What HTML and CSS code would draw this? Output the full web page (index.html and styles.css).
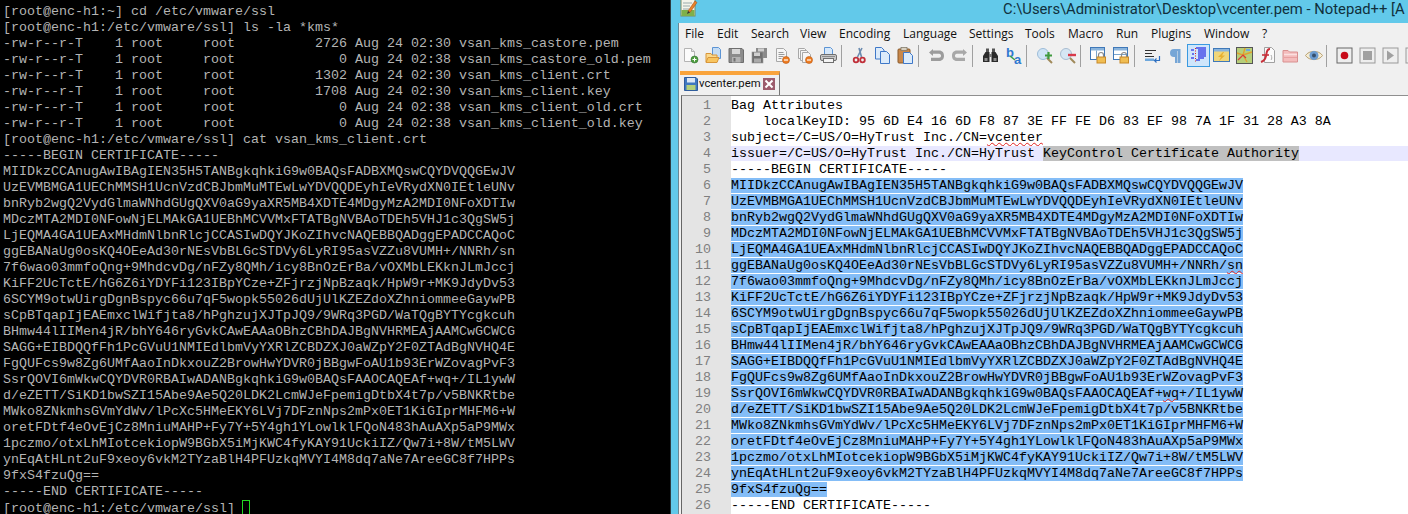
FILE: index.html
```html
<!DOCTYPE html>
<html lang="en">
<head>
<meta charset="utf-8">
<title>vcenter.pem</title>
<link rel="stylesheet" href="styles.css">
</head>
<body>
<main class="screen">
<pre class="term">[root@enc-h1:~] cd /etc/vmware/ssl
[root@enc-h1:/etc/vmware/ssl] ls -la *kms*
-rw-r--r-T    1 root     root          2726 Aug 24 02:30 vsan_kms_castore.pem
-rw-r--r-T    1 root     root             0 Aug 24 02:38 vsan_kms_castore_old.pem
-rw-r--r-T    1 root     root          1302 Aug 24 02:30 vsan_kms_client.crt
-rw-r--r-T    1 root     root          1708 Aug 24 02:30 vsan_kms_client.key
-rw-r--r-T    1 root     root             0 Aug 24 02:38 vsan_kms_client_old.crt
-rw-r--r-T    1 root     root             0 Aug 24 02:38 vsan_kms_client_old.key
[root@enc-h1:/etc/vmware/ssl] cat vsan_kms_client.crt
-----BEGIN CERTIFICATE-----
MIIDkzCCAnugAwIBAgIEN35H5TANBgkqhkiG9w0BAQsFADBXMQswCQYDVQQGEwJV
UzEVMBMGA1UEChMMSH1UcnVzdCBJbmMuMTEwLwYDVQQDEyhIeVRydXN0IEtleUNv
bnRyb2wgQ2VydGlmaWNhdGUgQXV0aG9yaXR5MB4XDTE4MDgyMzA2MDI0NFoXDTIw
MDczMTA2MDI0NFowNjELMAkGA1UEBhMCVVMxFTATBgNVBAoTDEh5VHJ1c3QgSW5j
LjEQMA4GA1UEAxMHdmNlbnRlcjCCASIwDQYJKoZIhvcNAQEBBQADggEPADCCAQoC
ggEBANaUg0osKQ4OEeAd30rNEsVbBLGcSTDVy6LyRI95asVZZu8VUMH+/NNRh/sn
7f6wao03mmfoQng+9MhdcvDg/nFZy8QMh/icy8BnOzErBa/vOXMbLEKknJLmJccj
KiFF2UcTctE/hG6Z6iYDYFi123IBpYCze+ZFjrzjNpBzaqk/HpW9r+MK9JdyDv53
6SCYM9otwUirgDgnBspyc66u7qF5wopk55026dUjUlKZEZdoXZhniommeeGaywPB
sCpBTqapIjEAEmxclWifjta8/hPghzujXJTpJQ9/9WRq3PGD/WaTQgBYTYcgkcuh
BHmw44lIIMen4jR/bhY646ryGvkCAwEAAaOBhzCBhDAJBgNVHRMEAjAAMCwGCWCG
SAGG+EIBDQQfFh1PcGVuU1NMIEdlbmVyYXRlZCBDZXJ0aWZpY2F0ZTAdBgNVHQ4E
FgQUFcs9w8Zg6UMfAaoInDkxouZ2BrowHwYDVR0jBBgwFoAU1b93ErWZovagPvF3
SsrQOVI6mWkwCQYDVR0RBAIwADANBgkqhkiG9w0BAQsFAAOCAQEAf+wq+/IL1ywW
d/eZETT/SiKD1bwSZI15Abe9Ae5Q20LDK2LcmWJeFpemigDtbX4t7p/v5BNKRtbe
MWko8ZNkmhsGVmYdWv/lPcXc5HMeEKY6LVj7DFznNps2mPx0ET1KiGIprMHFM6+W
oretFDtf4eOvEjCz8MniuMAHP+Fy7Y+5Y4gh1YLowlklFQoN483hAuAXp5aP9MWx
1pczmo/otxLhMIotcekiopW9BGbX5iMjKWC4fyKAY91UckiIZ/Qw7i+8W/tM5LWV
ynEqAtHLnt2uF9xeoy6vkM2TYzaBlH4PFUzkqMVYI4M8dq7aNe7AreeGC8f7HPPs
9fxS4fzuQg==
-----END CERTIFICATE-----
[root@enc-h1:/etc/vmware/ssl] <span class="cursor"></span></pre>

<section class="np">
  <header class="titlebar">
    <svg class="appicon" width="18" height="17" viewBox="0 0 18 17"><rect x="1" y="-2" width="14" height="18" fill="#f4f4ea" stroke="#7d8a60"/><rect x="1.5" y="10" width="13" height="6" fill="#7fb04a"/><path d="M3 3h9M3 6h7M3 9h6" stroke="#9aa" fill="none"/><path d="M8 11L15 1l2 1.500L10 12.500z" fill="#e9832a" stroke="#a8501a" stroke-width=".6"/><path d="M8 11l-1 3 3-1.500z" fill="#333"/></svg>
    <span class="wintitle">C:\Users\Administrator\Desktop\vcenter.pem - Notepad++ [A</span>
  </header>
  <div class="client">
    <nav class="menu">
      <span>File</span><span>Edit</span><span>Search</span><span>View</span><span>Encoding</span><span>Language</span><span>Settings</span><span>Tools</span><span>Macro</span><span>Run</span><span>Plugins</span><span>Window</span><span>?</span>
    </nav>
    <div class="toolbar">
      <span class="tool"><svg width="17" height="17" viewBox="0 0 17 17"><path d="M2.500 1.500h7l3 3v10h-10z" fill="#fbfbfb" stroke="#b4b4b4"/><path d="M9.500 1.500v3h3" fill="#e4e4e4" stroke="#b4b4b4"/><circle cx="12.500" cy="12.500" r="3.500" fill="#4f9e3f" stroke="#2f7030" stroke-width=".6"/><path d="M10.500 12.500h4M12.500 10.500v4" stroke="#fff"/></svg></span>
      <span class="tool"><svg width="17" height="17" viewBox="0 0 17 17"><path d="M7.500 .5h6l2 2v9h-8z" fill="#c4dcf4" stroke="#5c94d4"/><path d="M1 6.500h5l1 1.500h5v7H1z" fill="#fbd98c" stroke="#d8963a"/><path d="M1 15.500l2-5h11l-2 5z" fill="#f8c560" stroke="#d8963a"/></svg></span>
      <span class="tool"><svg width="17" height="17" viewBox="0 0 17 17"><path d="M1 1.500h13l1.500 1.500v12.500H1z" fill="#8c8c8c" stroke="#6e6e6e"/><rect x="4" y="2" width="8" height="5" fill="#d8d8d8"/><rect x="4" y="10" width="8.500" height="5.500" fill="#b4b4b4"/><rect x="5.500" y="11" width="2" height="3.500" fill="#707070"/></svg></span>
      <span class="tool"><svg width="17" height="17" viewBox="0 0 17 17"><rect x="5" y="1" width="11" height="10" fill="#8a8a8a"/><rect x="7" y="1.500" width="6" height="3" fill="#cfcfcf"/><rect x="1" y="5" width="11" height="11" fill="#707070" stroke="#999" stroke-width=".6"/><rect x="3" y="5.500" width="6" height="3.500" fill="#cfcfcf"/><rect x="3" y="11.500" width="7" height="4" fill="#aaa"/></svg></span>
      <span class="tool"><svg width="17" height="17" viewBox="0 0 17 17"><path d="M2.500 1.500h7l3 3v10h-10z" fill="#f6f6f6" stroke="#a8a8a8"/><path d="M4.500 5.500h5M4.500 7.500h6M4.500 9.500h5M4.500 11.500h3" stroke="#9a9a9a"/><circle cx="12" cy="13" r="3.500" fill="#ee7d22" stroke="#b85510" stroke-width=".6"/><path d="M10 13h4" stroke="#fff" stroke-width="1.200"/></svg></span>
      <span class="tool"><svg width="17" height="17" viewBox="0 0 17 17"><path d="M1.500 1.500h6l2 2v8h-8z" fill="#f6f6f6" stroke="#a8a8a8"/><path d="M3.500 3.500h6l2 2v8h-8z" fill="#f6f6f6" stroke="#a8a8a8"/><path d="M5.500 5.500h6l2 2v8h-8z" fill="#f6f6f6" stroke="#a8a8a8"/><circle cx="12" cy="13" r="3.500" fill="#ee7d22" stroke="#b85510" stroke-width=".6"/><path d="M10 13h4" stroke="#fff" stroke-width="1.200"/></svg></span>
      <span class="tool"><svg width="17" height="17" viewBox="0 0 17 17"><path d="M4.500 .5h6l2 2v6h-8z" fill="#d6e8fa" stroke="#5c94d4"/><rect x=".5" y="7.500" width="16" height="6" rx="1.500" fill="#c8c8c8" stroke="#6f6f6f"/><rect x="3.500" y="11.500" width="10" height="4" fill="#f4f4f4" stroke="#6f6f6f"/><rect x="2" y="9" width="13" height="1" fill="#8a8a8a"/></svg></span>
      <span class="tsep"></span>
      <span class="tool"><svg width="17" height="17" viewBox="0 0 17 17"><path d="M6.500 10L11 1M10.500 10L8 1" stroke="#6c8cb0" stroke-width="1.600" fill="none"/><circle cx="5" cy="13" r="2.300" fill="none" stroke="#c0303a" stroke-width="1.800"/><circle cx="11.500" cy="13" r="2.300" fill="none" stroke="#c0303a" stroke-width="1.800"/></svg></span>
      <span class="tool"><svg width="17" height="17" viewBox="0 0 17 17"><path d="M1.500 .5h6l2.500 2.500v9h-8.500z" fill="#dcebfa" stroke="#3f78c8"/><path d="M6.500 4.500h6l3 3v9h-9z" fill="#dcebfa" stroke="#3f78c8"/></svg></span>
      <span class="tool"><svg width="17" height="17" viewBox="0 0 17 17"><rect x="1" y="2" width="12" height="14" rx="1" fill="#c8874a" stroke="#8a5a2a"/><rect x="4" y=".5" width="6" height="3" fill="#d8d0c0" stroke="#77705f" stroke-width=".7"/><path d="M6.500 5.500h6l3 3v8h-9z" fill="#dcebfa" stroke="#3f78c8"/></svg></span>
      <span class="tsep"></span>
      <span class="tool"><svg width="17" height="17" viewBox="0 0 17 17"><path d="M5 2L1 5.500 5 9V6.700h6c1.500 0 2 1 2 2s-.5 2-2 2H3V14h8c3.500 0 5-2.500 5-5.300S14.500 3.500 11 3.500H5z" fill="#9c9c9c"/></svg></span>
      <span class="tool"><svg width="17" height="17" viewBox="0 0 17 17"><path d="M12 2l4 3.500L12 9V6.700H6c-1.500 0-2 1-2 2s.5 2 2 2h8V14H6c-3.500 0-5-2.500-5-5.300S2.500 3.500 6 3.500h6z" fill="#a8a8a8"/></svg></span>
      <span class="tsep"></span>
      <span class="tool"><svg width="17" height="17" viewBox="0 0 17 17"><rect x="4" y="1.500" width="3" height="4" fill="#555"/><rect x="10" y="1.500" width="3" height="4" fill="#555"/><path d="M3.500 5h4v10H1V9zM13.500 5h-4v10H16V9z" fill="#2a2a2a"/><rect x="7" y="7" width="3" height="3" fill="#777"/><rect x="2.500" y="11" width="3" height="3" fill="#8a8a8a"/><rect x="11.500" y="11" width="3" height="3" fill="#8a8a8a"/></svg></span>
      <span class="tool"><svg class="ic-replace" width="18" height="18" viewBox="0 0 18 18"><text x="1" y="10" class="ic-letter">b</text><text x="9" y="17" class="ic-letter">a</text><path d="M5 9l5 4" stroke="#3aa04a" stroke-width="1.600"/></svg></span>
      <span class="tsep"></span>
      <span class="tool"><svg width="18" height="17" viewBox="0 0 18 17"><circle cx="7" cy="7" r="5.500" fill="#cfe4f6" stroke="#9dbcd8"/><path d="M11 11l5 5" stroke="#a08a5a" stroke-width="2"/><path d="M9 8.500h7M12.500 5v7" stroke="#3f9a3f" stroke-width="2.200"/></svg></span>
      <span class="tool"><svg width="18" height="17" viewBox="0 0 18 17"><circle cx="7" cy="7" r="5.500" fill="#d6e6f4" stroke="#a8bcd0"/><path d="M11 11l5 5" stroke="#a08a5a" stroke-width="2"/><path d="M9 8h8" stroke="#d83a4a" stroke-width="2.400"/></svg></span>
      <span class="tsep"></span>
      <span class="tool"><svg width="17" height="17" viewBox="0 0 17 17"><rect x=".5" y=".5" width="14" height="12" fill="#fff" stroke="#3f78b8"/><rect x="1" y="1" width="13" height="2.500" fill="#8ab4dc"/><path d="M6.500 3.500v9" stroke="#7aa4cc"/><path d="M8.500 10V8a2.500 2.500 0 015 0v2" fill="none" stroke="#8a8a8a" stroke-width="1.200"/><rect x="7" y="10" width="8.500" height="6" fill="#f0bd52" stroke="#c88a2a"/></svg></span>
      <span class="tool"><svg width="17" height="17" viewBox="0 0 17 17"><rect x=".5" y=".5" width="14" height="12" fill="#fff" stroke="#3f78b8"/><rect x="1" y="1" width="13" height="2.500" fill="#8ab4dc"/><path d="M1 7.500h13" stroke="#7aa4cc"/><path d="M8.500 10V8a2.500 2.500 0 015 0v2" fill="none" stroke="#8a8a8a" stroke-width="1.200"/><rect x="7" y="10" width="8.500" height="6" fill="#f0bd52" stroke="#c88a2a"/></svg></span>
      <span class="tsep"></span>
      <span class="tool"><svg width="17" height="17" viewBox="0 0 17 17"><path d="M1 3.500h11M1 6.500h7M1 9.500h9" stroke="#333" stroke-width="1"/><rect x="1" y="11.500" width="9" height="2.500" fill="#6fa8dc"/><path d="M15.500 9v4.500H11M12.500 11.500l-2 2 2 2" fill="none" stroke="#2f6fc0" stroke-width="1.200"/></svg></span>
      <span class="tool"><svg width="17" height="17" viewBox="0 0 17 17"><path d="M13.500 2H7a3.500 3.500 0 000 8h1v6h2.500V4H11v12h2.500z" fill="#76a6d6"/></svg></span>
      <span class="tool tool-on"><svg width="17" height="17" viewBox="0 0 17 17"><path d="M6 1h10M8 3h8M8 5h8M8 7h8M8 9h8M8 11h6M6 13h4" stroke="#0000e0" stroke-width="1.200"/><path d="M5.500 1v15" stroke="#e02020" stroke-dasharray="1 1.500"/><path d="M1 3h3M2 7h2M1 11h3" stroke="#0000e0"/></svg></span>
      <span class="tool"><svg width="18" height="17" viewBox="0 0 18 17"><rect x=".5" y="1.500" width="16" height="13" fill="#f0d67a" stroke="#3f78b8"/><rect x="1" y="2" width="15" height="2.500" fill="#8ab4dc"/><path d="M10 5L5 10h3l-2 4 6-5.500H9l2-3.500z" fill="#e8b030"/></svg></span>
      <span class="tool"><svg width="17" height="17" viewBox="0 0 17 17"><rect x=".5" y=".5" width="16" height="16" fill="#b6cf7a" stroke="#555"/><path d="M1 6l6 2 4 7M9 1L7 8M7 8l9-3" fill="none" stroke="#e0a030" stroke-width="1.400"/><path d="M2 13l5-5 3 3" fill="none" stroke="#d83a3a" stroke-width="1.200"/><rect x="10" y="2" width="4" height="2" fill="#6fa8dc"/></svg></span>
      <span class="tool"><svg width="17" height="17" viewBox="0 0 17 17"><path d="M5.500 .5h7l3 3v12h-10z" fill="#fafafa" stroke="#a0a0a0"/><path d="M11 2C7 2 8 6 7 9c-.7 3-2 5-5 6" fill="none" stroke="#c8303a" stroke-width="2"/><path d="M3 8h7" stroke="#c8303a" stroke-width="1.600"/><path d="M12 8c1 2 1 4 0 5" fill="none" stroke="#aaa"/></svg></span>
      <span class="tool"><svg width="17" height="17" viewBox="0 0 17 17"><path d="M1 3.500h5l1.500 1.500h8v10H1z" fill="#f4bcbc" stroke="#d89090"/><path d="M2 7.500h13" stroke="#fbe0e0" stroke-width="1.500"/><path d="M2 10.500h13" stroke="#e8a0a0"/></svg></span>
      <span class="tool"><svg width="18" height="17" viewBox="0 0 18 17"><path d="M.5 8.500C4 3 14 3 17.500 8.500 14 14 4 14 .5 8.500z" fill="#f4ecd4" stroke="#b8a070"/><circle cx="9" cy="8.500" r="4.500" fill="#6c9cd0"/><circle cx="9" cy="8.500" r="2" fill="#36506c"/></svg></span>
      <span class="tsep"></span>
      <span class="tool"><svg width="17" height="17" viewBox="0 0 17 17"><rect x="1" y="1" width="15" height="15" fill="#eee" stroke="#666"/><circle cx="8.500" cy="8.500" r="3.800" fill="#c80a18"/></svg></span>
      <span class="tool"><svg width="17" height="17" viewBox="0 0 17 17"><rect x="1" y="1" width="15" height="15" fill="#eee" stroke="#999"/><rect x="4" y="4" width="9" height="9" fill="#a0a0a0"/></svg></span>
      <span class="tool"><svg width="17" height="17" viewBox="0 0 17 17"><rect x="1" y="1" width="15" height="15" fill="#eee" stroke="#999"/><path d="M5 3.500l7 5-7 5z" fill="#a0a0a0"/></svg></span>
      <span class="tool"><svg width="17" height="17" viewBox="0 0 17 17"><rect x="1" y="1" width="15" height="15" fill="#eee" stroke="#999"/></svg></span>
    </div>
    <div class="tabbar">
      <div class="tab">
        <svg width="14" height="14" viewBox="0 0 14 14"><path d="M.5.500h11.500l1.500 1.500v11.500H.5z" fill="#3f78c0" stroke="#2f5c9c"/><rect x="3" y="1" width="8" height="4.500" fill="#dce8f6"/><rect x="2.500" y="8" width="9" height="5" fill="#b4d07a"/></svg>
        <span class="tabname">vcenter.pem</span>
        <span class="tabclose"><svg width="12" height="12" viewBox="0 0 12 12"><rect width="12" height="12" fill="#9c5c6c"/><path d="M2.500 2.500l7 7M9.500 2.500l-7 7" stroke="#fff" stroke-width="2"/></svg></span>
      </div>
    </div>
    <div class="editor">
      <div class="row"><span class="ln">1</span><span class="code">Bag Attributes</span></div>
      <div class="row"><span class="ln">2</span><span class="code">    localKeyID: 95 6D E4 16 6D F8 87 3E FF FE D6 83 EF 98 7A 1F 31 28 A3 8A</span></div>
      <div class="row"><span class="ln">3</span><span class="code">subject=/C=US/O=HyTrust Inc./CN=<span class="typo">vcenter</span></span></div>
      <div class="row"><span class="ln">4</span><span class="code current">issuer=/C=US/O=HyTrust Inc./CN=HyTrust <span class="match">KeyControl Certificate Authority</span></span></div>
      <div class="row"><span class="ln">5</span><span class="code">-----BEGIN CERTIFICATE-----</span></div>
      <div class="row"><span class="ln">6</span><span class="code sel">MIIDkzCCAnugAwIBAgIEN35H5TANBgkqhkiG9w0BAQsFADBXMQswCQYDVQQGEwJV</span></div>
      <div class="row"><span class="ln">7</span><span class="code sel">UzEVMBMGA1UEChMMSH1UcnVzdCBJbmMuMTEwLwYDVQQDEyhIeVRydXN0IEtleUNv</span></div>
      <div class="row"><span class="ln">8</span><span class="code sel">bnRyb2wgQ2VydGlmaWNhdGUgQXV0aG9yaXR5MB4XDTE4MDgyMzA2MDI0NFoXDTIw</span></div>
      <div class="row"><span class="ln">9</span><span class="code sel">MDczMTA2MDI0NFowNjELMAkGA1UEBhMCVVMxFTATBgNVBAoTDEh5VHJ1c3QgSW5j</span></div>
      <div class="row"><span class="ln">10</span><span class="code sel">LjEQMA4GA1UEAxMHdmNlbnRlcjCCASIwDQYJKoZIhvcNAQEBBQADggEPADCCAQoC</span></div>
      <div class="row"><span class="ln">11</span><span class="code sel">ggEBANaUg0osKQ4OEeAd30rNEsVbBLGcSTDVy6LyRI95asVZZu8VUMH+/NNRh/<span class="typo">sn</span></span></div>
      <div class="row"><span class="ln">12</span><span class="code sel">7f6wao03mmfoQng+9MhdcvDg/nFZy8QMh/icy8BnOzErBa/vOXMbLEKknJLmJccj</span></div>
      <div class="row"><span class="ln">13</span><span class="code sel">KiFF2UcTctE/hG6Z6iYDYFi123IBpYCze+ZFjrzjNpBzaqk/HpW9r+MK9JdyDv53</span></div>
      <div class="row"><span class="ln">14</span><span class="code sel">6SCYM9otwUirgDgnBspyc66u7qF5wopk55026dUjUlKZEZdoXZhniommeeGaywPB</span></div>
      <div class="row"><span class="ln">15</span><span class="code sel">sCpBTqapIjEAEmxclWifjta8/hPghzujXJTpJQ9/9WRq3PGD/WaTQgBYTYcgkcuh</span></div>
      <div class="row"><span class="ln">16</span><span class="code sel">BHmw44lIIMen4jR/bhY646ryGvkCAwEAAaOBhzCBhDAJBgNVHRMEAjAAMCwGCWCG</span></div>
      <div class="row"><span class="ln">17</span><span class="code sel">SAGG+EIBDQQfFh1PcGVuU1NMIEdlbmVyYXRlZCBDZXJ0aWZpY2F0ZTAdBgNVHQ4E</span></div>
      <div class="row"><span class="ln">18</span><span class="code sel">FgQUFcs9w8Zg6UMfAaoInDkxouZ2BrowHwYDVR0jBBgwFoAU1b93ErWZovagPvF3</span></div>
      <div class="row"><span class="ln">19</span><span class="code sel">SsrQOVI6mWkwCQYDVR0RBAIwADANBgkqhkiG9w0BAQsFAAOCAQEAf+<span class="typo">wq</span>+/IL1ywW</span></div>
      <div class="row"><span class="ln">20</span><span class="code sel">d/eZETT/SiKD1bwSZI15Abe9Ae5Q20LDK2LcmWJeFpemigDtbX4t7p/v5BNKRtbe</span></div>
      <div class="row"><span class="ln">21</span><span class="code sel">MWko8ZNkmhsGVmYdWv/lPcXc5HMeEKY6LVj7DFznNps2mPx0ET1KiGIprMHFM6+W</span></div>
      <div class="row"><span class="ln">22</span><span class="code sel">oretFDtf4eOvEjCz8MniuMAHP+Fy7Y+5Y4gh1YLowlklFQoN483hAuAXp5aP9MWx</span></div>
      <div class="row"><span class="ln">23</span><span class="code sel">1pczmo/otxLhMIotcekiopW9BGbX5iMjKWC4fyKAY91UckiIZ/Qw7i+8W/tM5LWV</span></div>
      <div class="row"><span class="ln">24</span><span class="code sel">ynEqAtHLnt2uF9xeoy6vkM2TYzaBlH4PFUzkqMVYI4M8dq7aNe7AreeGC8f7HPPs</span></div>
      <div class="row"><span class="ln">25</span><span class="code sel">9fxS4fzuQg==</span></div>
      <div class="row"><span class="ln">26</span><span class="code">-----END CERTIFICATE-----</span></div>
    </div>
  </div>
</section>
</main>
</body>
</html>
```
FILE: styles.css
```css
* { box-sizing: border-box; }
html, body { margin: 0; padding: 0; background: #000; }
.screen { display: flex; width: 1408px; height: 514px; overflow: hidden; }

.term {
  flex: none;
  width: 670px;
  height: 514px;
  margin: 0;
  padding: 4px 0 0 3px;
  background: #000;
  color: #b4b4b4;
  font: 13.333px/16px "Liberation Mono", monospace;
  white-space: pre;
  overflow: hidden;
}
.cursor {
  display: inline-block;
  width: 8px;
  height: 15px;
  margin-left: -1px;
  border: 1px solid #22d822;
  vertical-align: -3px;
}

.np {
  flex: none;
  width: 738px;
  height: 514px;
  display: flex;
  flex-direction: column;
  background: #62c9ea;
  border-left: 1px solid #2b3a40;
  padding-left: 7px;
  overflow: hidden;
}
.titlebar {
  flex: none;
  height: 23px;
  display: flex;
  align-items: flex-start;
  padding-left: 2px;
  overflow: hidden;
}
.appicon { flex: none; }
.wintitle {
  margin-left: 305px;
  white-space: nowrap;
  font: 14.8px/19px "Roboto", sans-serif;
  color: #10303c;
}
.client {
  flex: 1;
  min-height: 0;
  display: flex;
  flex-direction: column;
  background: #f0f0f0;
  border-left: 1px solid #6a8794;
}

.menu {
  flex: none;
  height: 20px;
  display: grid;
  grid-template-columns: 32px 34px 49px 39px 64px 66px 56px 43px 48px 35px 53px 58px auto;
  padding: 1px 0 0 6px;
  font: 12px/20px "Open Sans", sans-serif;
  color: #111;
}

.toolbar {
  flex: none;
  height: 25px;
  display: flex;
  align-items: center;
  overflow: hidden;
}
.tool {
  flex: none;
  width: 23px;
  height: 23px;
  display: flex;
  align-items: center;
  justify-content: center;
}
.tool-on { background: #cfe6fb; border: 1px solid #3a9ae0; }
.tsep {
  flex: none;
  width: 8px;
  height: 22px;
  background: linear-gradient(#a0a0a0, #a0a0a0) 1px 0 / 1px 100% no-repeat;
}
.ic-replace { overflow: visible; }
.ic-letter { font: bold 13px "Liberation Sans", sans-serif; fill: #2f78d0; }

.tabbar {
  flex: none;
  height: 27px;
  padding: 3px 0 0 1px;
  background: #f0f0f0;
}
.tab {
  width: 100px;
  height: 24px;
  display: flex;
  align-items: center;
  padding: 0 0 2px 4px;
  border-top: 4px solid #f9a43c;
  border-right: 1px solid #777;
  background: #f0f0f0;
}
.tabname {
  margin-left: 1px;
  width: 64px;
  font: 11.3px/16px "Roboto", sans-serif;
  color: #111;
  white-space: nowrap;
}
.tabclose { display: flex; }

.editor {
  flex: 1;
  min-height: 0;
  margin-left: 2px;
  border-left: 1px solid #666;
  border-top: 1px solid #8f8f8f;
  padding-top: 1px;
  background: linear-gradient(#e4e4e4, #e4e4e4) 0 0 / 49px 100% no-repeat, #fff;
  font: 13.333px/15px "Liberation Mono", monospace;
  overflow: hidden;
}
.row { display: flex; height: 16px; white-space: pre; }
.ln {
  flex: none;
  width: 49px;
  padding: 1px 20px 0 0;
  text-align: right;
  color: #7f7f7f;
}
.code { flex: 1; height: 15px; margin-top: 1px; color: #000; }
.current { background: #e8e8ff; }
.match { background: #c0c0c0; }
.sel { flex: none; background: #84bdf7; }
.typo { text-decoration: underline wavy #e02020 1px; }
```
